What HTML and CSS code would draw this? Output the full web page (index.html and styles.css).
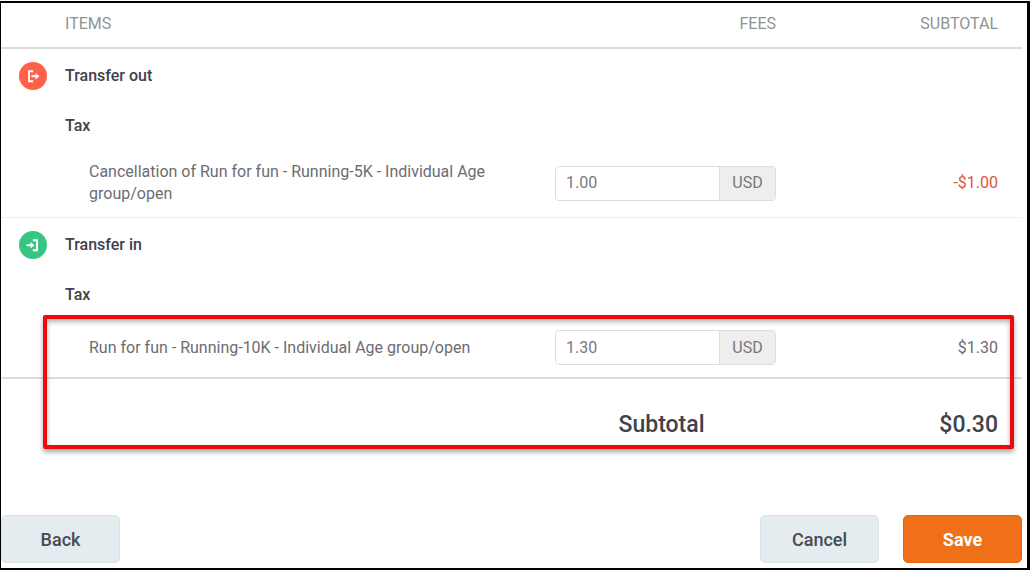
FILE: index.html
```
<!DOCTYPE html>
<html lang="en">
<head>
  <meta charset="UTF-8">
  <meta name="viewport" content="width=device-width, initial-scale=1.0">
  <title>Transfer fees</title>
  <link rel="stylesheet" href="styles.css">
</head>
<body>
  <form class="panel">
    <div class="table-wrap">
      <table class="fees-table">
        <colgroup>
          <col class="col-icon">
          <col class="col-items">
          <col class="col-fees">
          <col class="col-subtotal">
        </colgroup>
        <thead>
          <tr>
            <th></th>
            <th>ITEMS</th>
            <th class="right">FEES</th>
            <th class="right amount">SUBTOTAL</th>
          </tr>
        </thead>
        <tbody>
          <tr class="transfer">
            <td class="icon-cell">
              <span class="icon icon-out">
                <svg viewBox="0 0 28 28" width="28" height="28" aria-hidden="true">
                  <path d="M14.2 9.2H10v10h4.2" fill="none" stroke="#fff" stroke-width="1.9"/>
                  <path d="M12.5 14.2H18" fill="none" stroke="#fff" stroke-width="2"/>
                  <path d="M16.5 11l4 3.2-4 3.2z" fill="#fff"/>
                </svg>
              </span>
            </td>
            <td colspan="3">Transfer out</td>
          </tr>
          <tr class="group">
            <td></td>
            <td colspan="3">Tax</td>
          </tr>
          <tr class="item">
            <td></td>
            <td class="name"><label for="fee-out">Cancellation of Run for fun - Running-5K - Individual Age group/open</label></td>
            <td>
              <div class="input-group">
                <input type="text" id="fee-out" value="1.00">
                <span class="currency">USD</span>
              </div>
            </td>
            <td class="right amount negative">-$1.00</td>
          </tr>
        </tbody>
        <tbody>
          <tr class="transfer">
            <td class="icon-cell">
              <span class="icon icon-in">
                <svg viewBox="0 0 28 28" width="28" height="28" aria-hidden="true">
                  <path d="M13.8 9.2H18v10h-4.2" fill="none" stroke="#fff" stroke-width="1.9"/>
                  <path d="M7.5 14.2H13" fill="none" stroke="#fff" stroke-width="2"/>
                  <path d="M11.5 11l4 3.2-4 3.2z" fill="#fff"/>
                </svg>
              </span>
            </td>
            <td colspan="3">Transfer in</td>
          </tr>
          <tr class="group">
            <td></td>
            <td colspan="3">Tax</td>
          </tr>
          <tr class="item">
            <td></td>
            <td class="name"><label for="fee-in">Run for fun - Running-10K - Individual Age group/open</label></td>
            <td>
              <div class="input-group">
                <input type="text" id="fee-in" value="1.30">
                <span class="currency">USD</span>
              </div>
            </td>
            <td class="right amount">$1.30</td>
          </tr>
        </tbody>
        <tfoot>
          <tr class="total">
            <td colspan="2"></td>
            <td class="total-label">Subtotal</td>
            <td class="right amount">$0.30</td>
          </tr>
        </tfoot>
      </table>
      <div class="highlight"></div>
    </div>
    <div class="actions">
      <button type="button" class="btn">Back</button>
      <div class="actions-right">
        <button type="button" class="btn">Cancel</button>
        <button type="submit" class="btn btn-save">Save</button>
      </div>
    </div>
  </form>
</body>
</html>
```
FILE: styles.css
```
* {
  box-sizing: border-box;
}
body {
  margin: 0;
  padding-top: 1px;
  min-height: 100vh;
  display: flex;
  font-family: Roboto, "Liberation Sans", sans-serif;
  font-size: 16px;
  line-height: 22px;
  color: #6b6d72;
  background: #fff;
}
.panel {
  flex: 1;
  display: flex;
  flex-direction: column;
  border: solid #000;
  border-width: 2px 3px 2px 1px;
  padding: 0 5px 5px 0;
}
.table-wrap {
  position: relative;
}
.fees-table {
  width: 100%;
  table-layout: fixed;
  border-collapse: separate;
  border-spacing: 0;
}
.col-icon {
  width: 64px;
}
.col-fees {
  width: 221px;
}
.col-subtotal {
  width: 246px;
}
th,
td {
  padding: 0;
  text-align: left;
}
th {
  height: 46px;
  padding-bottom: 2px;
  font-weight: 400;
  color: #8b9497;
  border-bottom: 2px solid #ddd;
}
.right {
  text-align: right;
}
.fees-table .amount {
  padding-right: 24px;
}
.transfer td {
  height: 52px;
  padding-top: 2px;
}
.transfer,
.group {
  font-weight: 500;
  color: #3f424b;
}
.group td {
  height: 48px;
  padding-top: 2px;
}
.transfer .icon-cell {
  padding-left: 18px;
}
.icon {
  display: block;
  width: 28px;
  height: 28px;
  border-radius: 50%;
}
.icon svg {
  display: block;
}
.icon-out {
  background: #ff6047;
}
.icon-in {
  background: #36c681;
}
.item td {
  padding-top: 12px;
  padding-bottom: 12px;
  border-bottom: 1px solid #eee;
}
tbody:last-of-type .item td {
  border-bottom: 2px solid #ddd;
}
.item .name {
  padding-left: 24px;
  padding-right: 48px;
}
.item .negative {
  color: #e0523c;
}
.input-group {
  display: flex;
  height: 35px;
  border: 1px solid #ddd;
  border-radius: 4px;
  overflow: hidden;
}
.input-group input {
  flex: 1;
  min-width: 0;
  border: 0;
  padding: 0 10px;
  font: inherit;
  color: #77797c;
  background: #fff;
}
.currency {
  width: 56px;
  display: flex;
  align-items: center;
  justify-content: center;
  color: #77797c;
  background: #eee;
  border-left: 1px solid #ddd;
}
.total td {
  height: 90px;
  padding-top: 2px;
  font-size: 23px;
  font-weight: 500;
  color: #3f424b;
}
.total .total-label {
  text-align: center;
  padding-right: 8px;
}
.highlight {
  position: absolute;
  top: 312px;
  left: 42px;
  right: 8px;
  height: 134px;
  border: 4px solid #ee0a0a;
  border-radius: 2px;
  box-shadow: 0 3px 5px rgba(0, 0, 0, 0.35), inset 0 3px 5px rgba(0, 0, 0, 0.3);
  pointer-events: none;
}
.actions {
  display: flex;
  justify-content: space-between;
  margin-top: auto;
}
.actions-right {
  display: flex;
  gap: 24px;
}
.btn {
  width: 119px;
  height: 48px;
  padding: 2px 6px 0;
  font: inherit;
  font-size: 18px;
  font-weight: 500;
  color: #454b54;
  background: #e4ecf0;
  border: 1px solid #dae4e8;
  border-radius: 5px;
  cursor: pointer;
}
.btn-save {
  font-weight: 700;
  color: #fff;
  background: #f06f19;
  border-color: #e56410;
}
```
